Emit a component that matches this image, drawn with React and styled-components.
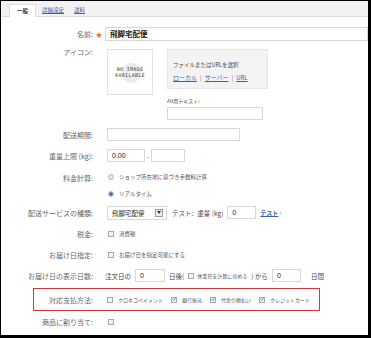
import React from "react";
import styled, { createGlobalStyle } from "styled-components";

const Global = createGlobalStyle`
  html, body { margin: 0; padding: 0; background: #000; }
  body { font-family: "Noto Sans CJK JP", "Noto Sans", sans-serif; }
`;

const Frame = styled.div`
  width: 371px;
  height: 338px;
  box-sizing: border-box;
  padding: 1px 3px 3px 1px;
  background: #000;
`;

const Sheet = styled.div`
  width: 100%;
  height: 100%;
  background: #fff;
  overflow: hidden;
`;

const TabBar = styled.div`
  height: 15px;
  background: #f2f2f2;
  border-bottom: 1px solid #dcdcdc;
  display: flex;
  align-items: flex-end;
  padding-left: 8px;
`;

const Tab = styled.div`
  height: ${(p) => (p.$active ? "13px" : "12px")};
  margin-bottom: ${(p) => (p.$active ? "-1px" : "0")};
  padding: 0 ${(p) => (p.$pad || 6)}px;
  display: flex;
  align-items: center;
  box-sizing: border-box;
  background: ${(p) => (p.$active ? "#fff" : "transparent")};
  border: ${(p) => (p.$active ? "1px solid #dcdcdc" : "none")};
  border-bottom: none;
  font-size: 5.5px;
  font-weight: ${(p) => (p.$active ? 700 : 400)};
  color: ${(p) => (p.$active ? "#333" : "#3a5fa8")};
  text-decoration: ${(p) => (p.$active ? "none" : "underline")};
`;

const Form = styled.div`
  padding-top: 6px;
  display: flex;
  flex-direction: column;
`;

const Row = styled.div`
  display: grid;
  grid-template-columns: 92px 12px 1fr;
  align-items: ${(p) => (p.$top ? "start" : "center")};
  min-height: ${(p) => p.$h || 21}px;
`;

const Boxed = styled.div`
  margin: 2px 48px 0 32px;
  border: 1px solid #cc3a40;
  height: 23px;
  box-sizing: border-box;
  display: grid;
  grid-template-columns: 59px 14px 1fr;
  align-items: center;
`;

const Label = styled.div`
  text-align: right;
  font-size: 7px;
  color: #666;
  white-space: nowrap;
  padding-top: ${(p) => p.$pt || 0}px;
`;

const Star = styled.span`
  color: #e0702a;
  font-size: 7px;
  text-align: center;
`;

const Cell = styled.div`
  display: flex;
  align-items: center;
  gap: ${(p) => p.$gap || 4}px;
  padding-left: ${(p) => p.$pl ?? 2}px;
  white-space: nowrap;
`;

const Input = styled.div`
  box-sizing: border-box;
  width: ${(p) => p.$w}px;
  height: ${(p) => p.$hh || 13}px;
  border: 1px solid #d8d8d8;
  background: #fff;
  display: flex;
  align-items: center;
  padding-left: 4px;
  font-size: ${(p) => p.$fs || 6.5}px;
  font-weight: ${(p) => (p.$bold ? 700 : 400)};
  color: #222;
  font-family: ${(p) => (p.$num ? '"Liberation Sans", sans-serif' : "inherit")};
`;

const IconArea = styled.div`
  display: flex;
  gap: 14px;
  padding-top: 5px;
  padding-left: 2px;
`;

const NoImage = styled.div`
  width: 46px;
  height: 46px;
  box-sizing: border-box;
  border: 1px solid #e2e2e2;
  position: relative;
  display: flex;
  align-items: center;
  justify-content: center;
  flex-direction: column;
  font-family: "DejaVu Sans Mono", monospace;
  font-weight: 700;
  font-size: 5px;
  line-height: 6px;
  color: #777;
  letter-spacing: 0.3px;
`;

const Watermark = styled.svg`
  position: absolute;
  left: 12px;
  top: 12px;
`;

const Caption = styled.span`
  position: relative;
`;

const Side = styled.div`
  display: flex;
  flex-direction: column;
`;

const Picker = styled.div`
  width: 101px;
  height: 40px;
  box-sizing: border-box;
  background: #f3f3f3;
  border: 1px solid #e6e6e6;
  padding: 11px 0 0 5px;
  font-size: 5.5px;
  color: #444;
  display: flex;
  flex-direction: column;
  gap: 4px;
`;

const LinkRow = styled.div`
  display: flex;
  gap: 3px;
  color: #777;
  font-size: 6px;
`;

const A = styled.span`
  color: #3a62b0;
  text-decoration: underline;
  font-size: ${(p) => p.$fs || 6}px;
  font-weight: ${(p) => (p.$bold ? 700 : 400)};
`;

const SmallLabel = styled.div`
  font-size: 5px;
  color: #555;
  margin-top: 8px;
  margin-bottom: 3px;
`;

const Radios = styled.div`
  display: flex;
  flex-direction: column;
  gap: 9px;
  padding-left: 3px;
  padding-top: 7px;
`;

const Choice = styled.div`
  display: flex;
  align-items: center;
  gap: ${(p) => p.$gap || 5}px;
  font-size: ${(p) => p.$fs || 5.5}px;
  color: #555;
  white-space: nowrap;
`;

const Radio = styled.span`
  width: 6px;
  height: 6px;
  border-radius: 50%;
  box-sizing: border-box;
  border: 1px solid #b8b8b8;
  background: ${(p) => (p.$on ? "radial-gradient(circle, #3a6fb5 0 1.5px, #cfe0f3 2px)" : "#e8e8e8")};
  flex: none;
`;

const Check = styled.span`
  width: 6px;
  height: 6px;
  box-sizing: border-box;
  border: 1px solid #a9a9a9;
  background: #f4f4f4;
  flex: none;
  display: flex;
  align-items: center;
  justify-content: center;
`;

const Text = styled.span`
  font-size: ${(p) => p.$fs || 6.5}px;
  color: ${(p) => p.$c || "#444"};
  margin-left: ${(p) => p.$ml || 0}px;
`;

const Select = styled.div`
  box-sizing: border-box;
  width: 60px;
  height: 14px;
  border: 1px solid #d8d8d8;
  display: flex;
  align-items: center;
  justify-content: space-between;
  padding: 0 3px 0 4px;
  font-size: 6.5px;
  color: #333;
`;

const Arrow = styled.span`
  width: 8px;
  height: 8px;
  box-sizing: border-box;
  border: 1px solid #9a9a9a;
  background: #eee;
  display: flex;
  align-items: center;
  justify-content: center;
`;

const Tick = () => (
  <svg width="5" height="5" viewBox="0 0 5 5">
    <path d="M0.8 2.6 L2 3.9 L4.3 0.8" fill="none" stroke="#3565b0" strokeWidth="1" />
  </svg>
);

const Box = ({ on }) => <Check>{on ? <Tick /> : null}</Check>;

export default function App() {
  return (
    <>
      <Global />
      <Frame>
        <Sheet>
          <TabBar>
            <Tab $active $pad={7}>一般</Tab>
            <Tab $pad={6}>詳細設定</Tab>
            <Tab $pad={4}>送料</Tab>
          </TabBar>
          <Form>
            <Row>
              <Label>名前:</Label>
              <Star>★</Star>
              <Input $w={263} $hh={14} $fs={7.5} $bold>飛脚宅配便</Input>
            </Row>
            <Row $top $h={80}>
              <Label $pt={3}>アイコン:</Label>
              <span />
              <IconArea>
                <NoImage>
                  <Watermark width="22" height="22" viewBox="0 0 22 22">
                    <circle cx="11" cy="11" r="10" fill="#eaeaea" />
                    <circle cx="11" cy="11" r="4" fill="#f8f8f8" />
                  </Watermark>
                  <Caption>NO IMAGE</Caption>
                  <Caption>AVAILABLE</Caption>
                </NoImage>
                <Side>
                  <Picker>
                    <span>ファイルまたはURLを選択</span>
                    <LinkRow>
                      <A>ローカル</A>|<A>サーバー</A>|<A>URL</A>
                    </LinkRow>
                  </Picker>
                  <SmallLabel>Alt用テキスト:</SmallLabel>
                  <Input $w={96} $hh={13} />
                </Side>
              </IconArea>
            </Row>
            <Row>
              <Label>配送期間:</Label>
              <span />
              <Cell>
                <Input $w={133} />
              </Cell>
            </Row>
            <Row>
              <Label>重量上限 (kg):</Label>
              <span />
              <Cell $gap={2}>
                <Input $w={38} $num $fs={7}>0.00</Input>
                <Text $c="#666">-</Text>
                <Input $w={34} />
              </Cell>
            </Row>
            <Row $top $h={36}>
              <Label $pt={7}>料金計算:</Label>
              <span />
              <Radios>
                <Choice>
                  <Radio />
                  ショップ所在地に基づき手数料計算
                </Choice>
                <Choice>
                  <Radio $on />
                  リアルタイム
                </Choice>
              </Radios>
            </Row>
            <Row>
              <Label>配送サービスの種類:</Label>
              <span />
              <Cell $gap={4}>
                <Select>
                  飛脚宅配便
                  <Arrow>
                    <svg width="4" height="3" viewBox="0 0 4 3">
                      <path d="M0 0 H4 L2 3 Z" fill="#333" />
                    </svg>
                  </Arrow>
                </Select>
                <Text $ml={1}>テスト:</Text>
                <Text>重量 (kg)</Text>
                <Input $w={29} $num $fs={7}>0</Input>
                <A $fs={6} $bold>テスト</A>
                <Text $c="#3a62b0" $fs={6} $ml={-3}>›</Text>
              </Cell>
            </Row>
            <Row>
              <Label>税金:</Label>
              <span />
              <Cell $pl={3}>
                <Choice>
                  <Box />
                  消費税
                </Choice>
              </Cell>
            </Row>
            <Row>
              <Label>お届け日指定:</Label>
              <span />
              <Cell $pl={3}>
                <Choice>
                  <Box />
                  お届け日を指定可能にする
                </Choice>
              </Cell>
            </Row>
            <Row>
              <Label>お届け日の表示日数:</Label>
              <span />
              <Cell $gap={4} $pl={0}>
                <Text>注文日の</Text>
                <Input $w={30} $num $fs={7}>0</Input>
                <Text>日後(</Text>
                <Choice $gap={3} $fs={5}>
                  <Box />
                  休業日を計算に含める
                </Choice>
                <Text>) から</Text>
                <Input $w={29} $num $fs={7}>0</Input>
                <Text $ml={6}>日間</Text>
              </Cell>
            </Row>
            <Boxed>
              <Label>対応支払方法:</Label>
              <span />
              <Cell $gap={8} $pl={0}>
                <Choice $fs={5}>
                  <Box />
                  クロネコペイメント
                </Choice>
                <Choice $fs={5}>
                  <Box on />
                  銀行振込
                </Choice>
                <Choice $fs={5}>
                  <Box on />
                  代金引換払い
                </Choice>
                <Choice $fs={5}>
                  <Box on />
                  クレジットカード
                </Choice>
              </Cell>
            </Boxed>
            <Row>
              <Label>商品に割り当て:</Label>
              <span />
              <Cell $pl={3}>
                <Box />
              </Cell>
            </Row>
          </Form>
        </Sheet>
      </Frame>
    </>
  );
}
